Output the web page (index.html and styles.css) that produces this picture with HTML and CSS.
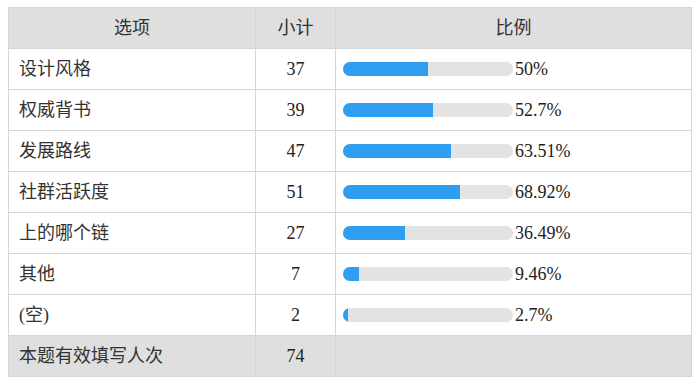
FILE: index.html
```html
<!DOCTYPE html>
<html lang="zh">
<head>
<meta charset="utf-8">
<link rel="stylesheet" href="styles.css">
</head>
<body>
<table class="stats">
  <colgroup>
    <col class="c-opt"><col class="c-num"><col class="c-pct">
  </colgroup>
  <thead>
    <tr><th>选项</th><th>小计</th><th>比例</th></tr>
  </thead>
  <tbody>
    <tr><td class="opt">设计风格</td><td class="num">37</td><td class="pct"><div class="cell"><div class="track"><div class="fill" style="width:50%"></div></div><span>50%</span></div></td></tr>
    <tr><td class="opt">权威背书</td><td class="num">39</td><td class="pct"><div class="cell"><div class="track"><div class="fill" style="width:52.7%"></div></div><span>52.7%</span></div></td></tr>
    <tr><td class="opt">发展路线</td><td class="num">47</td><td class="pct"><div class="cell"><div class="track"><div class="fill" style="width:63.51%"></div></div><span>63.51%</span></div></td></tr>
    <tr><td class="opt">社群活跃度</td><td class="num">51</td><td class="pct"><div class="cell"><div class="track"><div class="fill" style="width:68.92%"></div></div><span>68.92%</span></div></td></tr>
    <tr><td class="opt">上的哪个链</td><td class="num">27</td><td class="pct"><div class="cell"><div class="track"><div class="fill" style="width:36.49%"></div></div><span>36.49%</span></div></td></tr>
    <tr><td class="opt">其他</td><td class="num">7</td><td class="pct"><div class="cell"><div class="track"><div class="fill" style="width:9.46%"></div></div><span>9.46%</span></div></td></tr>
    <tr><td class="opt">(空)</td><td class="num">2</td><td class="pct"><div class="cell"><div class="track"><div class="fill" style="width:2.7%"></div></div><span>2.7%</span></div></td></tr>
    <tr class="total"><td class="opt">本题有效填写人次</td><td class="num">74</td><td></td></tr>
  </tbody>
</table>
</body>
</html>
```

FILE: styles.css
```css
html, body {
  margin: 0;
  padding: 0;
  background: #ffffff;
}
body {
  padding: 7px 0 0 8px;
  font-family: "Liberation Serif", "Noto Sans CJK SC", serif;
  font-size: 18px;
  color: #222;
}
.stats {
  border-collapse: collapse;
  width: 683px;
  table-layout: fixed;
}
.c-opt { width: 247px; }
.c-num { width: 80px; }
.c-pct { width: 356px; }
.stats th, .stats td {
  border: 1px solid #d6d6d6;
  height: 41px;
  padding: 0;
  box-sizing: border-box;
  line-height: 20px;
}
.stats th {
  background: #dfdfdf;
  font-weight: normal;
  color: #333;
  text-align: center;
}
.stats td.opt {
  padding-left: 10px;
  text-align: left;
  color: #333;
}
.stats td.num {
  text-align: center;
}
.stats td.pct {
  padding-left: 7px;
}
.cell {
  display: flex;
  align-items: center;
  gap: 2px;
}
.track {
  width: 170px;
  height: 14px;
  border-radius: 7px;
  background: #e3e3e3;
  overflow: hidden;
  flex: none;
}
.fill {
  height: 100%;
  background: #2d9ef0;
}
.total td {
  background: #dfdfdf;
}
```
